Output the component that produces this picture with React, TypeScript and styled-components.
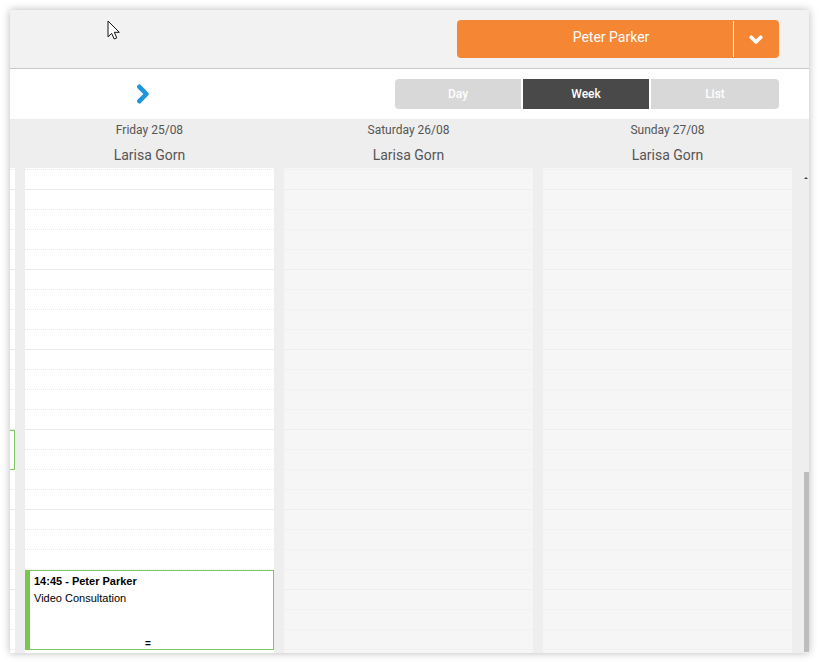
import styled, { createGlobalStyle } from 'styled-components';

const GlobalStyle = createGlobalStyle`
  html, body {
    margin: 0;
    padding: 0;
    background: #fff;
    font-family: Roboto, 'Liberation Sans', sans-serif;
  }
`;

const days = [
  { label: 'Friday 25/08', name: 'Larisa Gorn' },
  { label: 'Saturday 26/08', name: 'Larisa Gorn' },
  { label: 'Sunday 27/08', name: 'Larisa Gorn' },
];

// hour line every 4th slot, the first one lands on y=189
const slots = Array.from({ length: 25 }, (_, i) => i % 4 === 0);

const SlotList = ({ closed }: { closed?: boolean }) => (
  <>
    <TopSlot $closed={closed} />
    {slots.map((hour, i) => (
      <Slot key={i} $hour={hour} $closed={closed} />
    ))}
  </>
);

const App = () => {
  return (
    <Page>
      <GlobalStyle />
      <Card>
        <TopBar>
          <UserButton>
            <UserName>Peter Parker</UserName>
            <UserCaret>
              <svg width="14" height="10" viewBox="0 0 14 10">
                <path d="M2.2 2.2 7 7 11.8 2.2" fill="none" stroke="#fff" strokeWidth="3.6" strokeLinecap="round" strokeLinejoin="round" />
              </svg>
            </UserCaret>
          </UserButton>
        </TopBar>
        <NavBar>
          <NextButton>
            <svg width="14" height="20" viewBox="0 0 14 20">
              <path d="M3.4 2.8 10.4 10 3.4 17.2" fill="none" stroke="#1f96dc" strokeWidth="4.6" strokeLinecap="round" strokeLinejoin="round" />
            </svg>
          </NextButton>
          <Tabs>
            <Tab>Day</Tab>
            <Tab $active>Week</Tab>
            <Tab $wide>List</Tab>
          </Tabs>
        </NavBar>
        <DayHeader>
          {days.map((day) => (
            <DayCell key={day.label}>
              <DayLabel>{day.label}</DayLabel>
              <DayName>{day.name}</DayName>
            </DayCell>
          ))}
        </DayHeader>
        <Body>
          <Sliver>
            <SlotList />
            <SliverEvent />
          </Sliver>
          <DayColumn>
            <SlotList />
            <Event>
              <EventTitle>14:45 - Peter Parker</EventTitle>
              <EventText>Video Consultation</EventText>
              <EventHandle>=</EventHandle>
            </Event>
          </DayColumn>
          <DayColumn>
            <SlotList closed />
          </DayColumn>
          <DayColumn>
            <SlotList closed />
          </DayColumn>
          <Scrollbar>
            <ScrollArrow />
            <ScrollThumb />
          </Scrollbar>
        </Body>
      </Card>
      <Cursor width="13" height="20" viewBox="0 0 13 20">
        <path
          d="M1 1v15.8l3.7-3.4 2.5 5.6 2.6-1.1-2.5-5.6h5z"
          fill="#fff"
          stroke="#111"
          strokeWidth="1"
          strokeLinejoin="miter"
        />
      </Cursor>
    </Page>
  );
};

const Page = styled.div`
  position: relative;
  width: 819px;
  height: 662px;
  padding: 10px;
  box-sizing: border-box;
  overflow: hidden;
`;

const Card = styled.div`
  display: flex;
  flex-direction: column;
  width: 799px;
  height: 643px;
  background: #eee;
  box-shadow: 0 0 8px rgba(0, 0, 0, 0.28);
`;

const TopBar = styled.div`
  display: flex;
  justify-content: flex-end;
  flex: none;
  height: 59px;
  padding: 10px 30px 0 0;
  box-sizing: border-box;
  background: #f2f2f2;
  border-bottom: 1px solid #c9c9c9;
`;

const UserButton = styled.div`
  display: flex;
  width: 322px;
  height: 38px;
  background: #f58634;
  border-radius: 4px;
  color: #fff;
`;

const UserName = styled.div`
  flex: 1;
  padding-left: 32px;
  box-sizing: border-box;
  font-size: 14px;
  line-height: 34px;
  text-align: center;
`;

const UserCaret = styled.div`
  display: flex;
  align-items: center;
  justify-content: center;
  width: 46px;
  margin: 1px 0;
  padding: 1px 1px 0 0;
  box-sizing: border-box;
  border-left: 1px solid #fff;
`;

const NavBar = styled.div`
  display: flex;
  align-items: center;
  justify-content: space-between;
  flex: none;
  height: 50px;
  padding: 0 30px 0 126px;
  box-sizing: border-box;
  background: #fff;
`;

const NextButton = styled.div`
  display: flex;
  width: 14px;
  height: 20px;
`;

const Tabs = styled.div`
  display: flex;
  gap: 2px;
`;

const Tab = styled.div<{ $active?: boolean; $wide?: boolean }>`
  width: ${(p) => (p.$wide ? 128 : 126)}px;
  height: 30px;
  background: ${(p) => (p.$active ? '#494949' : '#d8d8d8')};
  color: #fff;
  font-size: 12px;
  font-weight: 500;
  line-height: 30px;
  text-align: center;

  &:first-child {
    border-radius: 4px 0 0 4px;
  }
  &:last-child {
    border-radius: 0 4px 4px 0;
  }
`;

const DayHeader = styled.div`
  display: flex;
  flex: none;
  gap: 10px;
  height: 49px;
  padding-left: 15px;
  background: #eee;
`;

const DayCell = styled.div`
  width: 249px;
  text-align: center;
  color: #555;
`;

const DayLabel = styled.div`
  font-size: 12px;
  line-height: 14px;
  padding-top: 4px;
`;

const DayName = styled.div`
  font-size: 14px;
  line-height: 16px;
  padding-top: 10px;
`;

const Body = styled.div`
  display: flex;
  flex: 1;
  gap: 10px;
  min-height: 0;
  overflow: hidden;
`;

const Sliver = styled.div`
  position: relative;
  flex: none;
  width: 5px;
  background: #fff;
`;

const DayColumn = styled.div`
  position: relative;
  flex: none;
  width: 249px;
  background: #fff;
`;

const lineColor = (hour?: boolean, closed?: boolean) => {
  if (closed) return hour ? '#eeeeee' : '#f1f1f1';
  return hour ? '#e8e8e8' : '#e9e9e9';
};

const TopSlot = styled.div<{ $closed?: boolean }>`
  height: 2px;
  box-sizing: border-box;
  background: ${(p) => (p.$closed ? '#f6f6f6' : '#fff')};
  border-bottom: 1px ${(p) => (p.$closed ? 'solid' : 'dotted')} ${(p) => lineColor(false, p.$closed)};
`;

const Slot = styled.div<{ $hour?: boolean; $closed?: boolean }>`
  height: 20px;
  box-sizing: border-box;
  background: ${(p) => (p.$closed ? '#f6f6f6' : '#fff')};
  border-bottom: 1px ${(p) => (p.$hour || p.$closed ? 'solid' : 'dotted')} ${(p) => lineColor(p.$hour, p.$closed)};
`;

const SliverEvent = styled.div`
  position: absolute;
  top: 262px;
  left: 0;
  width: 5px;
  height: 40px;
  box-sizing: border-box;
  background: #fff;
  border: 1px solid #82c765;
  border-left: none;
`;

const Event = styled.div`
  position: absolute;
  top: 402px;
  left: 0;
  width: 249px;
  height: 80px;
  padding: 4px 0 0 4px;
  box-sizing: border-box;
  background: #fff;
  border: 1px solid #82c765;
  border-left: 5px solid #78c850;
  color: #000;
  font-family: 'Liberation Sans', Arial, sans-serif;
  font-size: 11px;
`;

const EventTitle = styled.div`
  font-weight: 700;
  line-height: 13px;
`;

const EventText = styled.div`
  margin-top: 4px;
  line-height: 13px;
`;

const EventHandle = styled.div`
  position: absolute;
  left: 0;
  right: 0;
  bottom: -1px;
  padding-right: 7px;
  font-size: 10px;
  font-weight: 700;
  line-height: 12px;
  text-align: center;
`;

const Scrollbar = styled.div`
  position: relative;
  flex: 1;
`;

const ScrollArrow = styled.div`
  position: absolute;
  top: 9px;
  right: 1px;
  width: 0;
  height: 0;
  border-left: 2px solid transparent;
  border-right: 2px solid transparent;
  border-bottom: 2px solid #444;
`;

const ScrollThumb = styled.div`
  position: absolute;
  top: 304px;
  right: 0;
  bottom: 1px;
  width: 5px;
  background: #bdbdbd;
`;

const Cursor = styled.svg`
  position: absolute;
  top: 20px;
  left: 107px;
`;

export default App;
